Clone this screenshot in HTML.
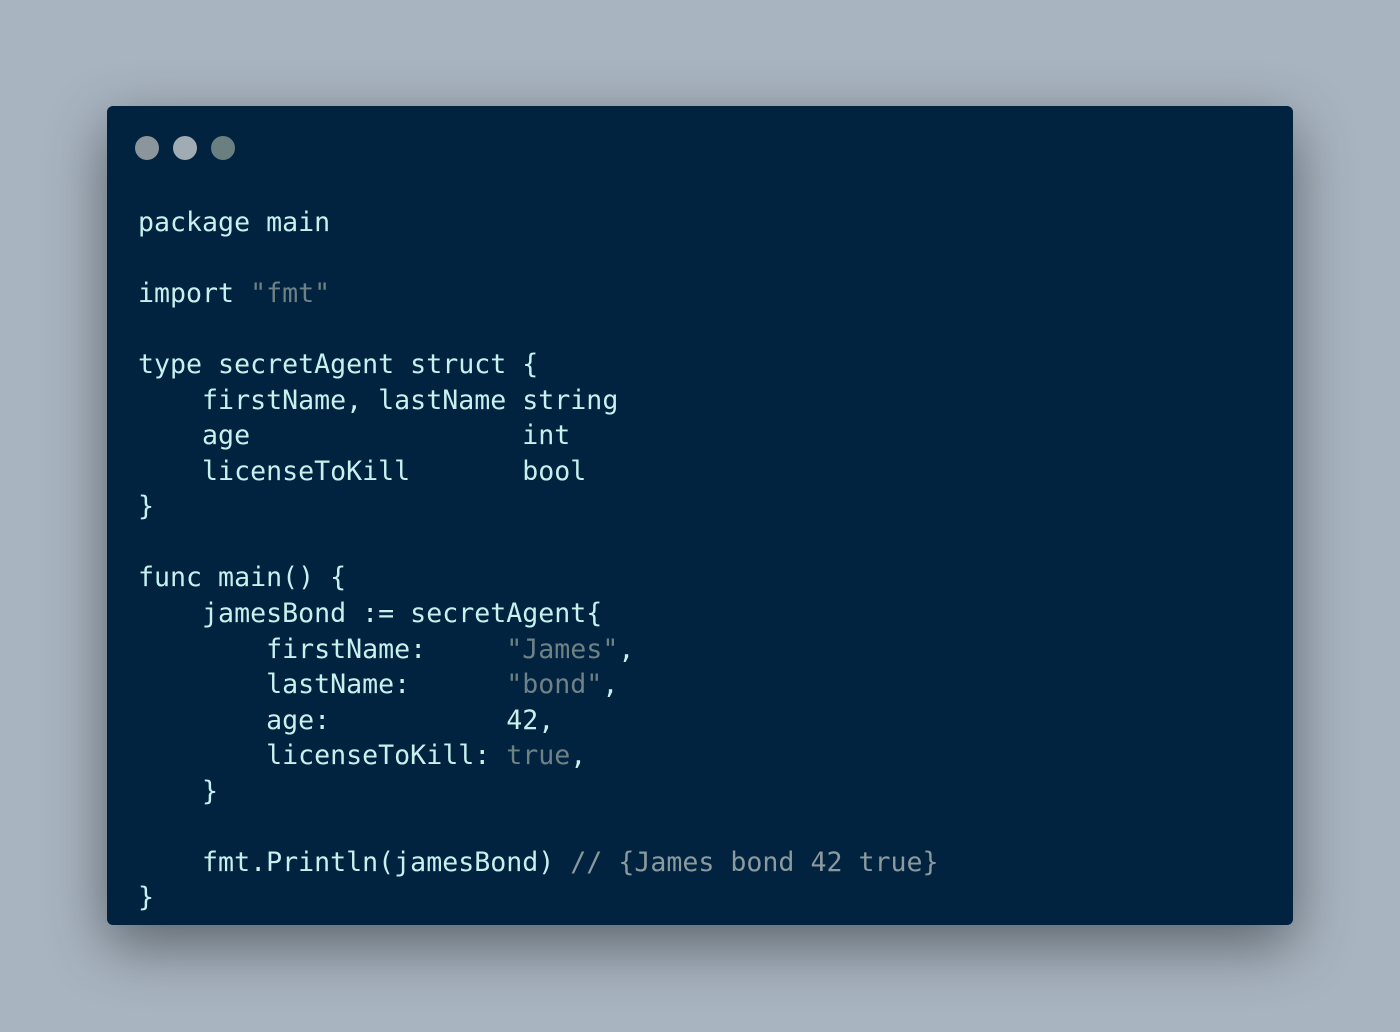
<!DOCTYPE html>
<html><head><style>
html,body{margin:0;padding:0;}
body{width:1400px;height:1032px;background:#a8b4c0;position:relative;overflow:hidden;}
.win{position:absolute;left:107px;top:106px;width:1186px;height:819px;background:#012340;border-radius:6px;box-shadow:0 20px 60px rgba(0,0,0,0.45);}
.d{position:absolute;top:136px;width:24px;height:24px;border-radius:50%;}
pre{position:absolute;left:138px;top:205px;margin:0;font-family:"DejaVu Sans Mono","Liberation Mono",monospace;font-size:26.6px;line-height:35.55px;color:#c6f1ec;}
.s{color:#6e8285}.c{color:#8a9a9d}
</style></head><body>
<div class="win"></div>
<div class="d" style="left:135px;background:#8b959c"></div>
<div class="d" style="left:173px;background:#a0abb3"></div>
<div class="d" style="left:211px;background:#6a8080"></div>
<pre>package main

import <span class="s">"fmt"</span>

type secretAgent struct {
    firstName, lastName string
    age                 int
    licenseToKill       bool
}

func main() {
    jamesBond := secretAgent{
        firstName:     <span class="s">"James"</span>,
        lastName:      <span class="s">"bond"</span>,
        age:           42,
        licenseToKill: <span class="s">true</span>,
    }

    fmt.Println(jamesBond) <span class="c">// {James bond 42 true}</span>
}</pre>
</body></html>
